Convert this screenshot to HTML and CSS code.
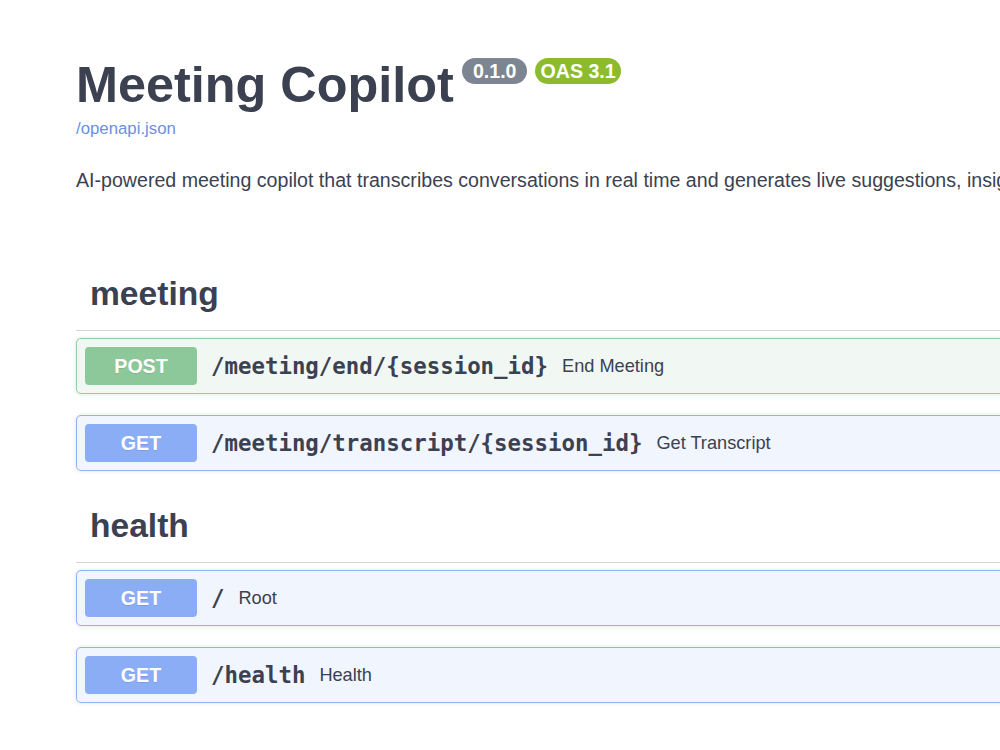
FILE: index.html
```html
<!DOCTYPE html>
<html lang="en">
<head>
<meta charset="utf-8">
<title>Meeting Copilot - Swagger UI</title>
<link rel="stylesheet" href="styles.css">
</head>
<body>
<div class="wrapper">
  <section class="info">
    <div class="title-row">
      <h2 class="title">Meeting Copilot</h2>
      <span class="stamp stamp-version">0.1.0</span>
      <span class="stamp stamp-oas">OAS 3.1</span>
    </div>
    <a class="spec-link" href="#">/openapi.json</a>
    <p class="description">AI-powered meeting copilot that transcribes conversations in real time and generates live suggestions, insights and summaries for every meeting.</p>
  </section>

  <section class="tag-section">
    <h3 class="tag">meeting</h3>
    <div class="opblock opblock-post">
      <span class="method">POST</span>
      <span class="path">/meeting/end/{session_id}</span>
      <span class="summary">End Meeting</span>
    </div>
    <div class="opblock opblock-get">
      <span class="method">GET</span>
      <span class="path">/meeting/transcript/{session_id}</span>
      <span class="summary">Get Transcript</span>
    </div>
  </section>

  <section class="tag-section">
    <h3 class="tag">health</h3>
    <div class="opblock opblock-get">
      <span class="method">GET</span>
      <span class="path">/</span>
      <span class="summary">Root</span>
    </div>
    <div class="opblock opblock-get">
      <span class="method">GET</span>
      <span class="path">/health</span>
      <span class="summary">Health</span>
    </div>
  </section>
</div>
</body>
</html>
```

FILE: styles.css
```css
html, body {
  margin: 0;
  padding: 0;
  background: #ffffff;
  overflow: hidden;
}

body {
  font-family: "Liberation Sans", Arial, Helvetica, sans-serif;
  color: #3b4151;
}

.wrapper {
  width: 1500px;
  padding-left: 76px;
}

.info {
  padding-top: 55px;
}

.title-row {
  display: flex;
  align-items: flex-start;
}

.title {
  margin: 0;
  font-size: 50.4px;
  line-height: 60px;
  font-weight: 700;
  color: #3b4151;
}

.stamp {
  margin-top: 3px;
  height: 26px;
  line-height: 26px;
  border-radius: 14px;
  color: #ffffff;
  font-weight: 700;
  font-size: 19.6px;
  white-space: nowrap;
}

.stamp-version {
  margin-left: 8px;
  padding: 0 11px;
  background: #7d8492;
}

.stamp-oas {
  margin-left: 8px;
  padding: 0 5px;
  background: #8cbc2e;
}

.spec-link {
  display: block;
  margin-top: 4px;
  font-size: 16.8px;
  line-height: 20px;
  color: #6c8fe4;
  text-decoration: none;
  width: max-content;
}

.description {
  margin: 27px 0 0;
  font-size: 19.6px;
  line-height: 29px;
  white-space: nowrap;
}

.tag-section {
  display: flex;
  flex-direction: column;
}

.info + .tag-section {
  margin-top: 63px;
}

.tag-section + .tag-section {
  margin-top: -2px;
}

.tag {
  margin: 0 0 7px;
  padding: 14px 28px 14px 14px;
  font-size: 33.6px;
  line-height: 44px;
  font-weight: 700;
  border-bottom: 1px solid #d4d5d9;
}

.opblock {
  display: flex;
  align-items: center;
  height: 54px;
  padding: 0 8px;
  margin-bottom: 21px;
  border: 1px solid;
  border-radius: 5px;
  box-shadow: 0 0 4px rgba(0, 0, 0, 0.12);
}

.opblock-post {
  background: #f1f8f3;
  border-color: #93d0a0;
}

.opblock-get {
  background: #f1f5fd;
  border-color: #93b1f4;
}

.method {
  flex: none;
  width: 112px;
  height: 38px;
  line-height: 38px;
  text-align: center;
  border-radius: 4px;
  color: #ffffff;
  font-size: 19.6px;
  font-weight: 700;
  text-shadow: 0 1px 0 rgba(0, 0, 0, 0.1);
}

.opblock-post .method {
  background: #8cc899;
}

.opblock-get .method {
  background: #8badf6;
}

.path {
  padding: 0 14px;
  font-family: "DejaVu Sans Mono", "Liberation Mono", monospace;
  font-weight: 700;
  font-size: 22.4px;
  color: #3b4151;
  white-space: nowrap;
}

.summary {
  font-size: 18.2px;
  color: #3b4151;
  white-space: nowrap;
}
```
